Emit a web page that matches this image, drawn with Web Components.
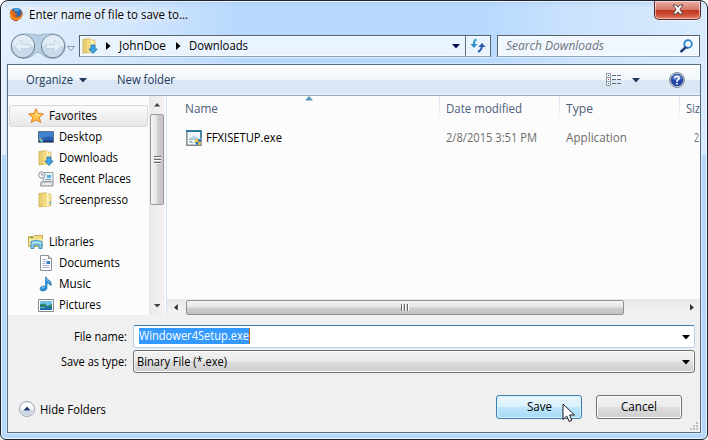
<!DOCTYPE html>
<html lang="en"><head><meta charset="utf-8"><title>Enter name of file to save to...</title>
<style>html,body{margin:0;height:100%;overflow:hidden;background:#fff}body{font:12px/16px "Open Sans","Noto Sans",sans-serif;color:#000}</style></head>
<body><save-dialog></save-dialog>
<script>
const define=(name,html,setup)=>{
  const t=document.createElement('template');t.innerHTML=html;
  customElements.define(name,class extends HTMLElement{
    constructor(){super();this.attachShadow({mode:'open'}).append(t.content.cloneNode(true));}
    connectedCallback(){if(setup)setup(this,this.shadowRoot);}
  });
};

/* A label condensed or widened to the width given in its w attribute. */
define('ui-text',`<style>:host{display:block;flex:none;white-space:nowrap;height:16px}span{display:inline-block;transform-origin:0 50%}</style><span><slot></slot></span>`,
(h,r)=>{const s=r.querySelector('span'),w=+h.getAttribute('w');h.style.width=w+'px';
  s.style.transform='scaleX('+w/s.getBoundingClientRect().width+')';});

const folder=`<path d="M1 1.5 8 .8v13L1 15z" fill="#e9cf72" stroke="#c5a544" stroke-width=".7"/><path d="M6 2h7v12H6z" fill="#f7e7a2" stroke="#d0b559" stroke-width=".7"/><path d="M5 1.7 9 1v14.2L5 14z" fill="#f4dc83"/><path d="M9.5 2v12" stroke="#fff6cd"/>`;
const icons={
 firefox:`<circle cx="8" cy="7.8" r="7" fill="#2767ac"/><path d="M5 2q4-2 7 1l-2 2-4-.5z" fill="#4aa4da"/><path d="M2.3 2.2 1 6.5Q.5 12 4 14q5 2.8 9-.8 3-3.5 1.6-8.2l-1-1.5q1 5.5-2 7.2-3.6 1.3-5-1.5l2.1-.3 1-1.3-2.3-.5Q5.900 5.800 6.300 4.300L4.300 4.400z" fill="#e66a16"/><path d="m2 5 1 5q2.500 3.700 6.700 3 3.800-1 4.800-6-.5 6.700-5.500 7.800Q3 15.500 1.300 10z" fill="#f9a72b"/><path d="M2 12q3 4 8 3" stroke="#b92b1d" fill="none"/>`,
 star:`<path d="m8 .8 2.100 4.700 5.200.4-3.900 3.500 1.300 5.200L8 11.900l-4.700 2.700 1.300-5.200L.7 5.900l5.200-.4z" fill="#ffc24a" stroke="#df7e21"/><path d="m8 2.500 1.500 3.800 3.500.3-5 1.400z" fill="#ffe9a0"/>`,
 desktop:`<path d="M.5 2.500h15v10.800H.5z" fill="#2c60b3" stroke="#5d7088"/><path d="M1 3h14v5Q7 6.500 1 10.500z" fill="#3c83d0"/><path d="M1 11.500h14v1.400H1z" fill="#16386f"/><path d="M1.500 9.500h2v2h-2z" fill="#f0c63c"/><circle cx="3.600" cy="11.700" r="1.500" fill="#55bdd5"/>`,
 downloads:folder+`<path d="M9 7h4v4h2.300L11 15.500 6.900 11H9z" fill="#3ba5e7" stroke="#2277b4" stroke-width=".8"/>`,
 recent:`<path d="M6 1.500h9v9H5z" fill="#e8f1f6" stroke="#90a0a9"/><path d="M9 4h4v3H9z" fill="#50b4dc"/><path d="M7 8.500h6" stroke="#7c9aaa"/><path d="m3 11 12-.5v4.500H2.500z" fill="#d8dce0" stroke="#8b9399"/><path d="M5 13h8" stroke="#f8f8f8"/><circle cx="3.800" cy="3.900" r="3.200" fill="#f4f6f7" stroke="#8d9499"/><path d="M3.800 2v2h1.800" stroke="#687580" fill="none" stroke-width=".8"/>`,
 folder:folder+`<path d="m11 11 2-2v4z" fill="#5bb2db"/>`,
 libraries:`<path d="M.5 2.500h5l1-1h8v11H.5z" fill="#f1dc83" stroke="#caa94b"/><path d="M1 5h14v6H1z" fill="#f7e9a5"/><path d="M2 3.500h3" stroke="#56a64c"/><path d="M3 7.500q5-2 11 0v7h-3V11H6v3.500H3z" fill="#86cbea" stroke="#3c94c4"/><path d="M4 9q5-1.500 9 0" stroke="#d9f3fb" fill="none"/>`,
 documents:`<path d="M2.500.5h8l3 3v12h-11z" fill="#fff" stroke="#8c9196"/><path d="M10.500.5v3h3" fill="#dee3e8" stroke="#8c9196"/><path d="M4.500 4.500h4M4.500 6.500h3M4.500 8.500h3M4.500 10.500h7M4.500 12.500h7" stroke="#9eafcf"/><path d="M8.500 6h3.500v3H8.500z" fill="#347dbd"/>`,
 music:`<path d="M8 1q1 2.500 4 4 2 2 1 5-1-2.700-4-3v5.500Q8.300 15 5 15q-3 0-3-2.300Q2.300 10 6 10q1 0 1.500.5V1z" fill="#2f91d5" stroke="#196eb1" stroke-width=".6"/><path d="M3.500 12q1-1.300 3-1M8.500 3q1 2 3 3.200" stroke="#96d7f3" fill="none"/>`,
 pictures:`<path d="M.5 2.500h15v12H.5z" fill="#fff" stroke="#858a8f"/><path d="M2 4h12v9H2z" fill="#72c2e9"/><path d="M2 7.500Q7 5 9 9q3-1 5-2v6H2z" fill="#35845f"/><path d="M2 9q6 0 12 1.200V13H2z" fill="#1d70a7"/><path d="M2 10.500h5" stroke="#67b6c7"/>`,
 exe:`<path d="M.8 .8h14.200v14.400H.8z" fill="#f4f8fb" stroke="#87898b" stroke-width="1.500"/><path d="M0 1.200h15.700" stroke="#1e769e" stroke-width="1.800"/><path d="M15 1v7" stroke="#2680a6" stroke-width="1.500"/><path d="m3 8 3-1 2-2 5 4-3 1H3z" fill="#b7d7ea"/><path d="M3 9.500h4M3 11.500h3M4 12.500h3" stroke="#9cb3c2"/><path d="M8.800 9.500q2 0 3.400-1 1.400 1 3.400 1 .2 4.500-3.400 6.300Q8.600 14 8.800 9.500z" fill="#2e76bd"/><path d="M12.200 12h3.200q-.6 2.700-3.200 3.800zM8.800 9.500q2 0 3.400-1V12H9z" fill="#f8ce36"/>`,
 refresh:`<path d="M6.500 1.500Q3.500 2 4 8" fill="none" stroke="#2b9bd0" stroke-width="2"/><path d="m.5 6 3.500 4 3.500-4z" fill="#2d91c8"/><path d="M12 7q0 5-4 7" fill="none" stroke="#315eaa" stroke-width="2"/><path d="m8.300 9 3.700-4 3.700 4z" fill="#315eaa"/>`,
 search:`<path d="m6.500 9.500-5 4.500" stroke="#263e7c" stroke-width="2.400"/><circle cx="9" cy="6" r="3.800" fill="#eef8ff" stroke="#2b82c5" stroke-width="1.800"/><path d="M5.500 8Q6.500 10 9 9.900" stroke="#29479a" fill="none" stroke-width="1.500"/>`,
 views:`<path d="M.5 1.500h4v4h-4zM.5 5.500h4v4h-4zM.5 9.500h4v4h-4z" fill="#fff" stroke="#8e98a4"/><path d="M2 3h1v1H2z" fill="#357"/><path d="M2 7h1v1H2z" fill="#c33"/><path d="M2 11h1v1H2z" fill="#357"/><path d="M6 3.500h4m1 0h4M6 7.500h4m1 0h4M6 11.500h4m1 0h4" stroke="#5e6c80"/>`,
 help:`<circle cx="8" cy="8" r="7.400" fill="#dfe4eb" stroke="#717c91"/><circle cx="8" cy="8" r="5.900" fill="#2146ac" stroke="#132b7b" stroke-width=".7"/><path d="M3 7a5 4.500 0 0 1 10 0q-5 2-10 0" fill="#5479d3"/><path d="M5.900 6.200Q6 4.300 8 4.300t2.200 1.700q0 1-1.200 1.700T8 9.800M8 11v1.500" stroke="#fff" fill="none" stroke-width="1.700"/>`,
 hide:`<circle cx="8" cy="8" r="7.600" fill="#e5e9ef" stroke="#9aa5b5" stroke-width=".9"/><path d="M1.500 8a6.500 6.500 0 0 1 13 0z" fill="#fff"/><path d="M2 10a6.200 6.200 0 0 0 12 0" fill="#cdd6e3"/><path d="m4.500 9.500 3.500-4 3.500 4z" fill="#1f3473"/>`,
 close:`<path d="M3 3h3.300L8 5.300 9.700 3H13l-3.100 4.500L13 12H9.700L8 9.700 6.300 12H3l3.100-4.500z" fill="#fff" stroke="#5b4547"/>`,
 nav:`<path d="M13.500.8q10 0 14.500 1.500 4.500-1.500 15-1.500a12.200 12.200 0 0 1 0 24.600q-8 0-12-5-3-2.500-6 0-4 5-12 5a12.200 12.200 0 0 1 .5-24.600z" fill="#9fbad4" fill-opacity=".6" stroke="#93abc2" stroke-width=".8"/><g fill="#c9dbea" stroke="#697c8d"><circle cx="13" cy="13.300" r="11.600"/><circle cx="43" cy="13.300" r="11.600"/></g><path d="M2 13a11 11 0 0 1 22 0zM32 13a11 11 0 0 1 22 0z" fill="#e1ecf6"/><g fill="#e6eff7" stroke="#bccddb" stroke-width=".8"><path d="M5 13.500 11.500 7v4.500H20v4h-8.500V20z"/><path d="M51 13.500 44.500 7v4.500H36v4h8.500V20z"/></g>`,
 down:`<path d="M0 0h8L4 4.500z" fill="var(--tri,#000)"/>`,
 right:`<path d="m0 0 4.500 4L0 8z" fill="var(--tri,#000)"/>`,
 left:`<path d="M4.500 0 0 4l4.500 4z" fill="var(--tri,#000)"/>`,
 up:`<path d="M0 4.500h8L4 0z" fill="var(--tri,#000)"/>`,
 hollow:`<path d="M.5.500h7L4 4.500z" fill="#edf5fc" stroke="#8199b2"/>`,
 cursor:`<path d="M1 1v15.500l3.700-3.500 2.400 5.500 2.800-1.200L7.500 12h5z" fill="#fff" stroke="#18181f" stroke-linejoin="round"/>`,
 grip:`<path d="M6 0h2v2H6zM3 3h2v2H3zM6 3h2v2H6zM0 6h2v2H0zM3 6h2v2H3zM6 6h2v2H6z" fill="#bcbcbc"/>`
};
const boxes={nav:[57,26],down:[8,5],up:[8,5],hollow:[8,5],right:[5,8],left:[5,8],cursor:[14,20],grip:[8,8]};
define('ui-icon',`<style>:host{display:block;flex:none}svg{display:block}</style><svg></svg>`,(h,r)=>{
  const n=h.getAttribute('name'),b=boxes[n]||[16,16],s=r.querySelector('svg'),k=+(h.getAttribute('scale')||1);
  s.setAttribute('viewBox','0 0 '+b[0]+' '+b[1]);s.setAttribute('width',b[0]*k);s.setAttribute('height',b[1]*k);s.innerHTML=icons[n];});

define('window-title',`<style>:host{display:flex;height:27px;align-items:flex-start;padding:0 6px 0 8px}
ui-icon.f{margin-top:6px}ui-text{margin:6px 0 0 6px;text-shadow:0 0 7px #fff,0 0 5px #fff}
.x{margin-left:auto;width:47px;height:19px;box-sizing:border-box;border:1px solid #5b262c;border-top:0;border-radius:0 0 5px 5px;box-shadow:inset 0 0 0 1px #ffffff80,0 1px 1px #ffffffb0;background:linear-gradient(#eaaea4,#d7796b 48%,#bd341d 50%,#d0553a 80%,#e5816a);display:flex;justify-content:center}.x ui-icon{margin-top:1px}</style>
<ui-icon class="f" name="firefox" scale=".9"></ui-icon><ui-text w="159"><slot></slot></ui-text><div class="x"><ui-icon name="close"></ui-icon></div>`);

define('address-bar',`<style>:host{display:flex;height:36px;padding:5px 0 0 9px;box-sizing:border-box;align-items:flex-start}
.h{margin:13px 0 0}.box{height:22px;box-sizing:border-box;border:1px solid #536270;border-bottom-color:#8fa5b7;background:#eaf4ff;display:flex;align-items:center;box-shadow:inset 0 0 0 1px #ffffffa0,0 1px #dcecff}
.a{width:412px;margin:2px 0 0 4px;padding-left:2px}.a ui-icon[name=right]{margin:0 8px 0 8px}.a .r2{margin-left:10px!important}.d{margin-left:auto;margin-right:5px;--tri:#08085a}.r{width:24px;height:20px;border-left:1px solid #63717f;display:grid;place-items:center}
.s{width:203px;margin:2px 0 0 6px;color:#6e7379;font-style:italic;padding:0 4px 0 8px;background:#f1f7ff;justify-content:space-between}</style>
<ui-icon name="nav"></ui-icon><ui-icon class="h" name="hollow"></ui-icon>
<div class="box a"><ui-icon name="downloads"></ui-icon><ui-icon name="right"></ui-icon><ui-text w="47">JohnDoe</ui-text><ui-icon name="right" class="r2"></ui-icon><ui-text w="59">Downloads</ui-text><ui-icon class="d" name="down"></ui-icon><div class="r"><ui-icon name="refresh"></ui-icon></div></div>
<div class="box s"><ui-text w="98">Search Downloads</ui-text><ui-icon name="search"></ui-icon></div>`);

define('tool-bar',`<style>:host{display:flex;height:31px;box-sizing:border-box;align-items:center;padding:0 15px 0 18px;color:#1e395b;--tri:#1e395b;border-bottom:1px solid #9da9bf;background:linear-gradient(#fff,#f0f6fc 48%,#dce7f5 52%,#dae6f4 90%,#e8f0fa)}
.o{margin:0 30px 0 6px}.v{margin-left:auto;margin-right:10px}.h{margin-left:29px}</style>
<ui-text w="47">Organize</ui-text><ui-icon class="o" name="down"></ui-icon><ui-text w="58">New folder</ui-text><ui-icon class="v" name="views"></ui-icon><ui-icon name="down"></ui-icon><ui-icon class="h" name="help"></ui-icon>`);

/* Builds its row on connection, so that the icon and the label get their attributes first. */
define('tree-node',`<style>:host{display:block}</style>`,(h,r)=>{
  const i=document.createElement('template');
  i.innerHTML='<style>.row{display:flex;height:21px;align-items:center;padding-left:30px;gap:5px;box-sizing:border-box}.root{padding-left:20px;gap:5px}.sel{margin:0 0 -1px 1px;padding-left:18px;border:1px solid #d9d9d9;border-radius:3px;height:22px;background:linear-gradient(#fafafa,#e8e8e8)}</style><div class="row '+(h.getAttribute('kind')||'')+'"><ui-icon name="'+h.getAttribute('icon')+'"></ui-icon><ui-text w="'+h.getAttribute('w')+'"><slot></slot></ui-text></div>';
  r.append(i.content.cloneNode(true));});

define('scroll-v',`<style>:host{display:flex;flex-direction:column;align-items:center;width:16px;background:linear-gradient(90deg,#e9e9e9,#f4f4f4);--tri:#444;box-sizing:border-box;padding:7px 0}.t{width:14px;height:91px;margin-top:7px;border:1px solid #9b9b9b;border-radius:2px;box-sizing:border-box;background:linear-gradient(90deg,#f5f5f5,#e5e5e6 48%,#d0d0d3 52%,#c3c3c8);display:grid;place-items:center}.g{width:7px;height:8px;background:repeating-linear-gradient(#686868 0 1px,#fff 1px 2px,#ccc 2px 3px)}.b{margin-top:auto}</style>
<ui-icon name="up" scale=".8"></ui-icon><div class="t"><div class="g"></div></div><ui-icon class="b" name="down" scale=".8"></ui-icon>`);
define('scroll-h',`<style>:host{display:flex;align-items:center;height:16px;box-sizing:border-box;padding:0 5px 0 7px;background:linear-gradient(#e9e9e9,#f3f3f3);--tri:#333}.t{width:438px;height:15px;margin-left:8px;border:1px solid #929292;border-radius:2px;box-sizing:border-box;background:linear-gradient(#f5f5f5,#e4e4e5 48%,#cfcfd2 52%,#bfbfc4);display:grid;place-items:center}.g{width:8px;height:7px;background:repeating-linear-gradient(90deg,#686868 0 1px,#fff 1px 2px,#ccc 2px 3px)}.b{margin-left:auto;margin-right:1px}</style>
<ui-icon name="left" scale=".85"></ui-icon><div class="t"><div class="g"></div></div><ui-icon class="b" name="right" scale=".85"></ui-icon>`);

define('folder-tree',`<style>:host{display:flex;width:158px;box-sizing:border-box}.l{width:140px;margin-right:1px;padding-top:9px}.gap{height:21px}</style>
<div class="l"><tree-node kind="root sel" icon="star" w="48">Favorites</tree-node><tree-node icon="desktop" w="43">Desktop</tree-node><tree-node icon="downloads" w="59">Downloads</tree-node><tree-node icon="recent" w="72">Recent Places</tree-node><tree-node icon="folder" w="69">Screenpresso</tree-node><div class="gap"></div><tree-node kind="root" icon="libraries" w="45">Libraries</tree-node><tree-node icon="documents" w="61">Documents</tree-node><tree-node icon="music" w="32">Music</tree-node><tree-node icon="pictures" w="42">Pictures</tree-node></div><scroll-v></scroll-v>`);

define('file-list',`<style>:host{display:flex;flex-direction:column;flex:1;min-width:0;border-left:1px solid #d7e6f5;overflow:hidden}
.r{display:grid;grid-template-columns:272px 120px 120px 1fr;position:relative}.head{height:25px;color:#4c607a}.head div,.row div{box-sizing:border-box;padding:5px 0 0 18px;min-width:0}
.head div+div{padding-left:6px;border-left:1px solid;border-image:linear-gradient(#d4e3f2,#fff0) 1}.head .s{position:absolute;left:138px;top:0;--tri:#5593b5}
.row{height:21px;margin-top:7px;color:#6d6d6d}.row div{padding-top:2px;padding-left:7px}.row .f{display:flex;gap:4px;padding-left:19px;color:#000}.row .z{padding-left:15px}scroll-h{margin-top:auto}</style>
<div class="r head"><div><ui-text w="33">Name</ui-text></div><div><ui-text w="76">Date modified</ui-text></div><div><ui-text w="27">Type</ui-text></div><div><ui-text w="14">Siz</ui-text></div><ui-icon class="s" name="up"></ui-icon></div>
<div class="r row"><div class="f"><ui-icon name="exe"></ui-icon><ui-text w="76">FFXISETUP.exe</ui-text></div><div><ui-text w="91">2/8/2015 3:51 PM</ui-text></div><div><ui-text w="61">Application</ui-text></div><div class="z"><ui-text w="5">2</ui-text></div></div><scroll-h></scroll-h>`);

define('push-button',`<style>:host{display:flex;width:86px;height:24px;box-sizing:border-box;justify-content:center;align-items:center;border:1px solid #707070;border-radius:3px;box-shadow:inset 0 0 0 1px #fcfcfc;background:linear-gradient(#f2f2f2,#ebebeb 49%,#dddddd 51%,#cfcfcf)}:host([hot]){border-color:#3c7fb1;box-shadow:inset 0 0 0 1px #d8f3fd;background:linear-gradient(#eaf6fd,#d9f0fc 49%,#bee6fd 51%,#a7d9f5)}</style><slot></slot>`);

define('save-form',`<style>:host{display:block;height:117px;background:#f0f0f0;box-sizing:border-box;padding:10px 5px 0 0;position:relative}
.r{display:flex;align-items:center;height:23px;margin-bottom:2px}.r>ui-text:first-child{margin-left:auto;margin-right:6px}
.c{width:562px;height:23px;box-sizing:border-box;border:1px solid #b5cfe7;border-top-color:#3d7bad;border-radius:2px;background:#fff;display:flex;align-items:center;padding:0 4px 0 5px}
.c.t{border-color:#707070;border-radius:3px;padding-left:3px;background:linear-gradient(#f2f2f2,#ebebeb 49%,#dddddd 51%,#cfcfcf);box-shadow:inset 0 0 0 1px #fafafa}.c ui-icon{margin-left:auto;margin-top:1px}.sel{background:#3399ff;color:#fff;height:16px;margin-top:-2px;border-right:1px solid #bf6518}
.b{display:flex;height:24px;margin-top:22px;align-items:center}.b ui-icon{margin:3px 5px 0 11px}.b ui-text.h{margin-right:auto;margin-top:5px}push-button{margin-right:14px}push-button+push-button{margin-right:13px}
.cur{position:absolute;left:554px;top:88px}.grip{position:absolute;right:2px;bottom:2px}</style>
<div class="r"><ui-text w="53">File name:</ui-text><div class="c"><div class="sel"><ui-text w="110">Windower4Setup.exe</ui-text></div><ui-icon name="down"></ui-icon></div></div>
<div class="r"><ui-text w="66">Save as type:</ui-text><div class="c t"><ui-text w="90">Binary File (*.exe)</ui-text><ui-icon name="down"></ui-icon></div></div>
<div class="b"><ui-icon name="hide"></ui-icon><ui-text class="h" w="66">Hide Folders</ui-text><push-button hot><ui-text w="25">Save</ui-text></push-button><push-button><ui-text w="36">Cancel</ui-text></push-button></div>
<ui-icon class="cur" name="cursor"></ui-icon><ui-icon class="grip" name="grip"></ui-icon>`);

define('save-dialog',`<style>:host{display:block;width:708px;height:440px;box-sizing:border-box;border:1px solid #20242e;border-radius:8px 8px 6px 6px;overflow:hidden;box-shadow:inset 0 0 0 1px #e8f4ff;
background:linear-gradient(#a9c8eb80,#fff0 6px),linear-gradient(90deg,#e3effc,#d4e7fc 17%,#b8d9fe 34%,#b7d9fe 68%,#cce3fd 82%,#d9eafd) 0 0/100% 154px no-repeat,#b7d8fb}
.client{width:692px;height:367px;border:1px solid #586d83;margin-left:6px;box-shadow:0 0 0 1px #d7eafd;background:#f0f0f0}.m{display:flex;height:219px;background:#fcfcfc}</style>
<window-title>Enter name of file to save to...</window-title><address-bar></address-bar>
<div class="client"><tool-bar></tool-bar><div class="m"><folder-tree></folder-tree><file-list></file-list></div><save-form></save-form></div>`);
</script></body></html>
